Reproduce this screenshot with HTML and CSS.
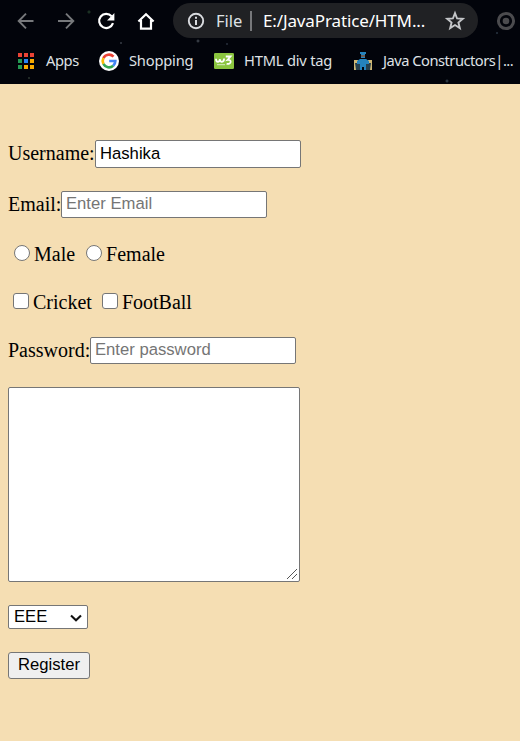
FILE: index.html
```html
<!DOCTYPE html>
<html lang="en">
<head>
<meta charset="utf-8">
<title>Register</title>
<link rel="stylesheet" href="styles.css">
</head>
<body>
<header class="browser">
  <div class="toolbar">
    <svg class="nav" viewBox="0 0 20 20"><path d="M17.5 10H3M10 2.7 2.7 10l7.3 7.3" stroke="#77797c"/></svg>
    <svg class="nav" viewBox="0 0 20 20"><path d="M2 10h15M10 2.7l7.3 7.3-7.3 7.3" stroke="#77797c"/></svg>
    <svg class="nav" viewBox="0 0 20 20"><path d="M15.6 5.2A7.1 7.1 0 1 0 17 12.2" stroke="#fff" stroke-width="2.2"/><path d="M18.4 2v7.4h-7.4z" fill="#fff"/></svg>
    <svg class="nav" viewBox="0 0 20 20"><path d="M2.4 10.5 10 3.3l7.6 7.2M5 9v8.6h10V9" stroke="#fff" stroke-width="2.2"/></svg>
    <div class="omnibox">
      <svg class="info" viewBox="0 0 18 18"><circle cx="9" cy="9" r="7.2" fill="none" stroke="#dadce0" stroke-width="1.9"/><path d="M9 8v5M9 4.8v2" stroke="#dadce0" stroke-width="2"/></svg>
      <span class="scheme">File</span>
      <span class="divider"></span>
      <span class="url">E:/JavaPratice/HTM...</span>
      <svg class="star" viewBox="0 0 20 20"><path d="m10 2.8 1.9 4.9 5.2.3-4 3.4 1.3 5.1L10 13.7l-4.4 2.8 1.3-5.1-4-3.4 5.2-.3z" fill="none" stroke="#c4c6c9" stroke-width="1.7"/></svg>
    </div>
    <svg class="extension" viewBox="0 0 20 20"><circle cx="10" cy="10" r="7.6" fill="none" stroke="#4b4b4e" stroke-width="3"/><circle cx="10" cy="10" r="3.3" fill="#4b4b4e"/></svg>
  </div>
  <nav class="bookmarks">
    <span class="bookmark apps"><svg viewBox="0 0 20 20"><g fill="#ea4335"><path d="M2 2h4v4H2zM8 2h4v4H8zM14 2h4v4h-4z"/></g><path d="M2 8h4v4H2zM2 14h4v4H2z" fill="#249a52"/><path d="M8 8h4v4H8z" fill="#2685f4"/><path d="M14 8h4v4h-4zM8 14h4v4H8zM14 14h4v4h-4z" fill="#f9ab00"/></svg><span>Apps</span></span>
    <span class="bookmark shopping"><svg viewBox="0 0 20 20"><circle cx="10" cy="10" r="10" fill="#fff"/><g fill="none" stroke-width="2.7"><path d="M14.5 5.6A6.3 6.3 0 0 0 4.4 7.1" stroke="#ea4335"/><path d="M4.4 7.1a6.3 6.3 0 0 0 0 5.8" stroke="#fbbc05"/><path d="M4.4 12.9a6.3 6.3 0 0 0 9.8 1.8" stroke="#34a853"/><path d="M14.2 14.7A6.3 6.3 0 0 0 16.3 10H10.2" stroke="#4285f4"/></g></svg><span>Shopping</span></span>
    <span class="bookmark htmldiv"><svg viewBox="0 0 20 20"><rect y="2" width="20" height="16" rx="1.2" fill="#8bc53f"/><path d="M2 7.8c0 4 3.8 4 3.8.3 0 3.7 4.3 3.7 4.3-.6M11.8 5.5h4.7l-3 3.4c4.5-.7 4.2 5-.9 3.9" fill="none" stroke="#fff" stroke-width="1.8"/><path d="M3 13.7h8" stroke="#d8edbd" stroke-width="1"/></svg><span>HTML div tag</span></span>
    <span class="bookmark java"><svg viewBox="0 0 20 20"><path d="M1 9h4v4H3v6H1zM19 9h-4v4h2v6h2z" fill="#cfb875"/><path d="M2 12h5v7H3zM18 12h-5v7h4z" fill="#263f4c"/><path d="M7 1h6v2h-1v4H8V3H7zM7 8h6l3 2v3h-3v6h-2v-3H9v3H7v-6H4v-3z" fill="#2583bd"/><path d="M8 4h4v2H8z" fill="#665f5b"/></svg><span>Java Constructors|...</span></span>
  </nav>
</header>
<form class="form">
  <div class="row username"><label for="user">Username:</label><input id="user" class="field" type="text" value="Hashika"></div>
  <div class="row email"><label for="mail">Email:</label><input id="mail" class="field" type="email" placeholder="Enter Email"></div>
  <div class="row choices gender"><input id="male" class="choice radio" type="radio" name="gender"><label for="male">Male</label><input id="female" class="choice radio" type="radio" name="gender"><label for="female">Female</label></div>
  <div class="row choices sports"><input id="cricket" class="choice" type="checkbox"><label for="cricket">Cricket</label><input id="football" class="choice" type="checkbox"><label for="football">FootBall</label></div>
  <div class="row password"><label for="pass">Password:</label><input id="pass" class="field" type="password" placeholder="Enter password"></div>
  <div class="message"><textarea class="area"></textarea><svg class="grip" viewBox="0 0 12 12"><path d="M1 11 11 1M6 11l5-5" stroke="#555" stroke-width="1"/></svg></div>
  <div class="picker"><select class="select"><option>EEE</option></select><svg class="chevron" viewBox="0 0 12 8"><path d="m1 1.5 5 4.7 5-4.7" fill="none" stroke="#111" stroke-width="2.1"/></svg></div>
  <button class="register" type="button">Register</button>
</form>
</body>
</html>
```
FILE: styles.css
```css
* { box-sizing: border-box; }
body { margin: 0; min-height: 741px; background: #f5deb3; color: #000; font: 20px/24px "Liberation Serif", serif; overflow: hidden; }
svg { display: block; flex: none; }

.browser {
  height: 84px;
  color: #dfe1e5;
  font-family: "Noto Sans", sans-serif;
  white-space: nowrap;
  background:
    radial-gradient(circle at 89px 12px, #1b3023 0 1px, transparent 2px),
    radial-gradient(circle at 121px 43px, #343942 0 .5px, transparent 1.5px),
    radial-gradient(circle at 198px 41px, #3c424b 0 .5px, transparent 2px),
    radial-gradient(circle at 227px 44px, #252c38 0 .5px, transparent 1.5px),
    radial-gradient(circle at 29px 78px, #28322c 0 .5px, transparent 1.5px),
    radial-gradient(circle at 447px 81px, #303e49 0 .5px, transparent 2px),
    radial-gradient(circle at 497px 33px, #26313e 0 .5px, transparent 1.5px),
    #02040b;
}
.toolbar { display: flex; align-items: center; height: 41px; padding-left: 16px; }
.nav { width: 20px; height: 20px; margin-right: 20px; fill: none; stroke-width: 1.9; }
.nav:nth-of-type(4) { margin-right: 17px; }
.omnibox { display: flex; align-items: center; flex: none; width: 305px; height: 35px; padding-left: 14px; border-radius: 18px; background: #202124; }
.info { width: 18px; height: 18px; margin-right: 11px; }
.scheme { width: 34px; font-size: 16.5px; }
.divider { width: 2px; height: 20px; margin-right: 11px; background: #77787b; }
.url { width: 181px; font-size: 17px; color: #fff; letter-spacing: -.13px; }
.star { width: 22px; height: 22px; }
.extension { width: 20px; height: 20px; margin-left: 18px; }
.bookmarks { display: flex; align-items: center; height: 40px; padding-left: 16px; font-size: 14.7px; letter-spacing: -.2px; }
.bookmark { display: flex; align-items: center; gap: 10px; flex: none; }
.bookmark svg { width: 20px; height: 20px; }
.bookmark span { padding-bottom: 2px; }
.apps { width: 83px; }
.apps span { letter-spacing: -.4px; }
.shopping { width: 115px; }
.htmldiv { width: 139px; }
.java span { letter-spacing: -.5px; }

.form { display: flex; flex-direction: column; align-items: flex-start; padding: 56px 8px 0; }
.row { display: flex; align-items: center; height: 27px; margin-bottom: 23px; }
.row.username { height: 28px; }
.row.email { margin-bottom: 24px; }
.username label, .email label, .password label { padding-bottom: 2px; }
.username label { width: 87px; }
.email label { width: 53px; }
.password label { width: 82px; }
.field { width: 206px; height: 100%; margin: 0; padding: 0 4px 1px; border: 1px solid #767676; border-radius: 2px; background: #fff; color: #000; font: 16.67px "Liberation Sans", sans-serif; outline: 0; }
.field::placeholder { color: #757575; opacity: 1; }
.row.choices { height: 24px; padding-left: 5px; }
.row.gender { margin-bottom: 24px; padding-left: 6px; }
.choice { appearance: none; width: 16px; height: 16px; margin: 0 4px 2px 0; border: 1px solid #767676; border-radius: 3px; background: #fff; }
.radio { border-radius: 50%; }
.gender label + .choice { margin-left: 11px; }
.sports label + .choice { margin-left: 10px; }
.message { position: relative; width: 292px; height: 195px; margin-bottom: 23px; }
.area { display: block; width: 100%; height: 100%; margin: 0; border: 1px solid #767676; border-radius: 2px; background: #fff; resize: none; outline: 0; }
.grip { position: absolute; right: 2px; bottom: 2px; width: 12px; height: 12px; }
.picker { position: relative; width: 80px; height: 24px; margin-bottom: 23px; }
.select { appearance: none; display: block; width: 100%; height: 100%; margin: 0; padding: 0 5px 1px; border: 1px solid #767676; border-radius: 2px; background: #fff; color: #000; font: 16.67px "Liberation Sans", sans-serif; }
.chevron { position: absolute; right: 6px; top: 9px; width: 12px; height: 8px; pointer-events: none; }
.register { width: 82px; height: 27px; margin: 0; padding: 0 0 2px; border: 1px solid #767676; border-radius: 3px; background: #efefef; color: #000; font: 16.67px "Liberation Sans", sans-serif; }
```
